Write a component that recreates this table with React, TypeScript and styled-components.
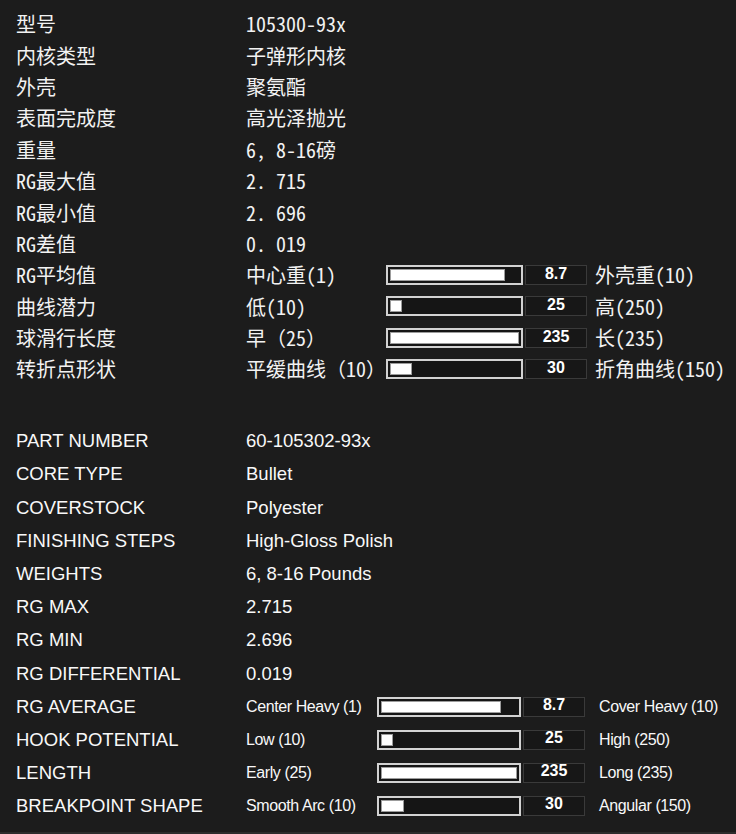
import styled, { createGlobalStyle } from 'styled-components'

const GlobalStyle = createGlobalStyle`
  html, body {
    margin: 0;
    padding: 0;
    background: #1c1c1c;
  }
`

const Page = styled.div`
  box-sizing: border-box;
  min-height: 834px;
  padding: 8px 0 0 16px;
  color: #f2f2f2;
  border-bottom: 2px solid #2c2c2c;
`

// the chinese block uses half-width latin, like SimHei does
const CnSection = styled.section`
  font-family: 'Noto Sans Mono CJK SC', 'Noto Sans CJK SC', sans-serif;
  font-size: 20px;
`

const EnSection = styled.section`
  margin-top: 40px;
  font-family: 'Liberation Sans', Arial, sans-serif;
  font-size: 18.5px;
  color: #f8f8f8;
`

const Row = styled.div<{ $h: number }>`
  display: grid;
  grid-template-columns: 230px 1fr;
  align-items: center;
  height: ${(p) => p.$h}px;
  white-space: nowrap;
`

const Label = styled.div``

const Value = styled.div``

const Meter = styled.div`
  display: flex;
  align-items: center;
`

const MeterText = styled.div<{ $w: number; $small?: boolean }>`
  width: ${(p) => p.$w}px;
  ${(p) => p.$small && 'font-size: 16px; letter-spacing: -0.4px;'}
`

const Track = styled.div<{ $w: number }>`
  box-sizing: border-box;
  display: flex;
  width: ${(p) => p.$w}px;
  height: 20px;
  padding: 2px;
  border: 2px solid #d2d2d2;
  background: #151515;
`

const Fill = styled.div`
  height: 100%;
  background: #fff;
  box-shadow: inset 0 0 0 1px #9c9c9c;
`

const NumBox = styled.div<{ $lh: number }>`
  box-sizing: border-box;
  width: 62px;
  height: 20px;
  margin-left: 2px;
  border: 1px solid #3a3a3a;
  background: #171717;
  font: bold 16px 'Liberation Sans', Arial, sans-serif;
  line-height: ${(p) => p.$lh}px;
  text-align: center;
  color: #fff;
`

const EndText = styled.div<{ $gap: number; $small?: boolean }>`
  margin-left: ${(p) => p.$gap}px;
  ${(p) => p.$small && 'font-size: 16px; letter-spacing: -0.4px;'}
`

type Info = { label: string; value: string }
type Gauge = { label: string; from: string; to: string; num: string; pct: number }

const cnInfo: Info[] = [
  { label: '型号', value: '105300-93x' },
  { label: '内核类型', value: '子弹形内核' },
  { label: '外壳', value: '聚氨酯' },
  { label: '表面完成度', value: '高光泽抛光' },
  { label: '重量', value: '6, 8-16磅' },
  { label: 'RG最大值', value: '2. 715' },
  { label: 'RG最小值', value: '2. 696' },
  { label: 'RG差值', value: '0. 019' },
]

const cnGauges: Gauge[] = [
  { label: 'RG平均值', from: '中心重(1)', to: '外壳重(10)', num: '8.7', pct: 89 },
  { label: '曲线潜力', from: '低(10)', to: '高(250)', num: '25', pct: 9 },
  { label: '球滑行长度', from: '早（25）', to: '长(235)', num: '235', pct: 100 },
  { label: '转折点形状', from: '平缓曲线（10）', to: '折角曲线(150)', num: '30', pct: 17 },
]

const enInfo: Info[] = [
  { label: 'PART NUMBER', value: '60-105302-93x' },
  { label: 'CORE TYPE', value: 'Bullet' },
  { label: 'COVERSTOCK', value: 'Polyester' },
  { label: 'FINISHING STEPS', value: 'High-Gloss Polish' },
  { label: 'WEIGHTS', value: '6, 8-16 Pounds' },
  { label: 'RG MAX', value: '2.715' },
  { label: 'RG MIN', value: '2.696' },
  { label: 'RG DIFFERENTIAL', value: '0.019' },
]

const enGauges: Gauge[] = [
  { label: 'RG AVERAGE', from: 'Center Heavy (1)', to: 'Cover Heavy (10)', num: '8.7', pct: 88 },
  { label: 'HOOK POTENTIAL', from: 'Low (10)', to: 'High (250)', num: '25', pct: 9 },
  { label: 'LENGTH', from: 'Early (25)', to: 'Long (235)', num: '235', pct: 100 },
  { label: 'BREAKPOINT SHAPE', from: 'Smooth Arc (10)', to: 'Angular (150)', num: '30', pct: 17 },
]

type Layout = {
  rowH: number
  textW: number
  trackW: number
  gap: number
  lh: number
  small?: boolean
}

const cnLayout: Layout = { rowH: 31.4, textW: 140, trackW: 137, gap: 8, lh: 16 }
const enLayout: Layout = { rowH: 33.2, textW: 131, trackW: 144, gap: 14, lh: 13, small: true }

const Table = ({ info, gauges, layout }: { info: Info[]; gauges: Gauge[]; layout: Layout }) => (
  <>
    {info.map((r) => (
      <Row key={r.label} $h={layout.rowH}>
        <Label>{r.label}</Label>
        <Value>{r.value}</Value>
      </Row>
    ))}
    {gauges.map((g) => (
      <Row key={g.label} $h={layout.rowH}>
        <Label>{g.label}</Label>
        <Meter>
          <MeterText $w={layout.textW} $small={layout.small}>
            {g.from}
          </MeterText>
          <Track $w={layout.trackW}>
            <Fill style={{ width: `${g.pct}%` }} />
          </Track>
          <NumBox $lh={layout.lh}>{g.num}</NumBox>
          <EndText $gap={layout.gap} $small={layout.small}>
            {g.to}
          </EndText>
        </Meter>
      </Row>
    ))}
  </>
)

export default function App() {
  return (
    <>
      <GlobalStyle />
      <Page>
        <CnSection>
          <Table info={cnInfo} gauges={cnGauges} layout={cnLayout} />
        </CnSection>
        <EnSection>
          <Table info={enInfo} gauges={enGauges} layout={enLayout} />
        </EnSection>
      </Page>
    </>
  )
}
